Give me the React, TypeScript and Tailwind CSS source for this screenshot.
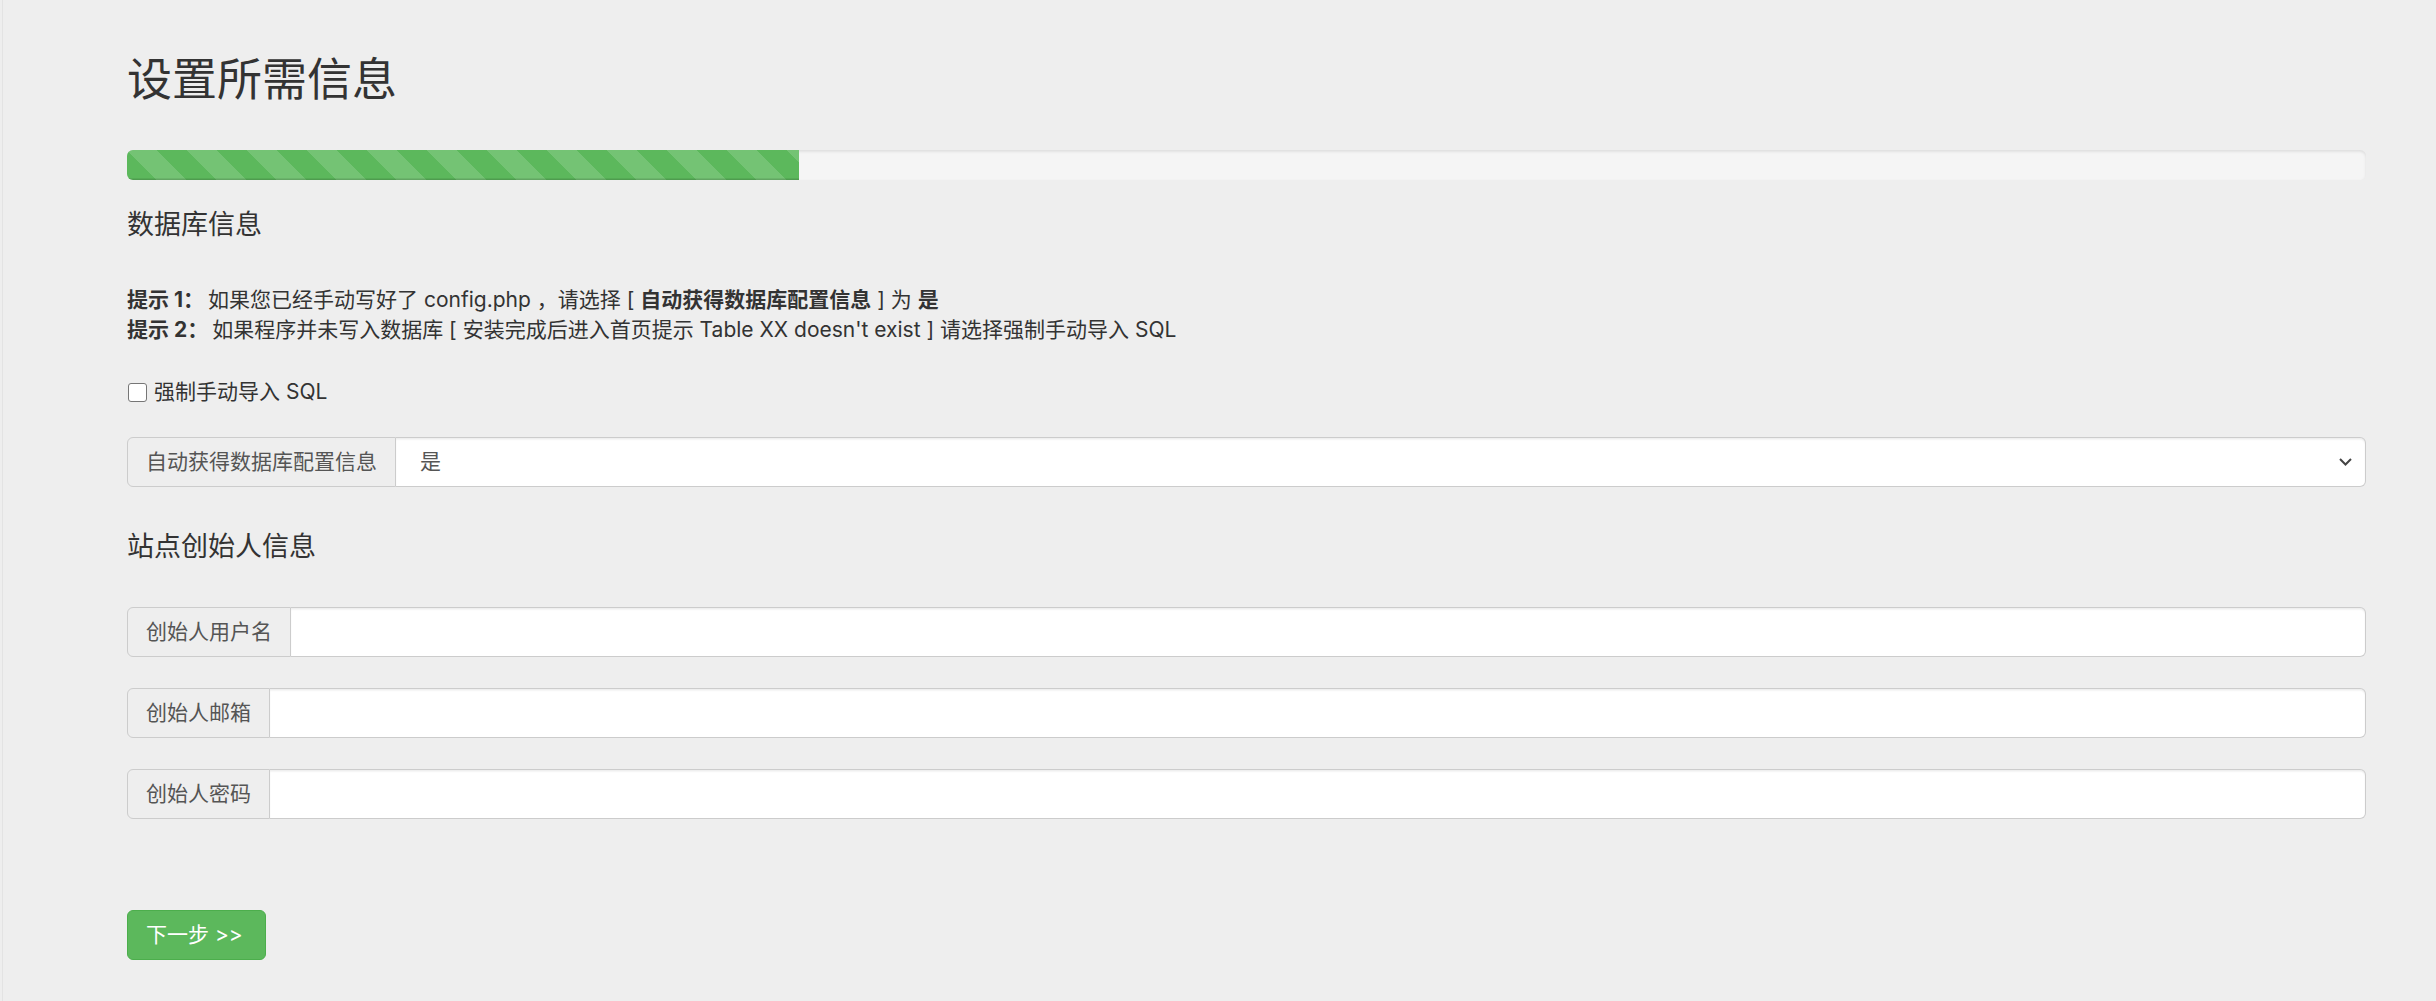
import { useState } from 'react';

/* ─── Input group (label addon + field) ─── */

function InputGroup({ label, type = 'text' }: { label: string; type?: string }) {
  return (
    <div className="flex h-[50px] w-full">
      <span className="flex items-center whitespace-nowrap rounded-l-[6px] border border-[#ccc] bg-[#eee] px-[18px] text-[21px] text-[#555]">
        {label}
      </span>
      <input
        type={type}
        className="min-w-0 flex-1 rounded-r-[6px] border border-l-0 border-[#ccc] bg-white px-[18px] text-[21px] text-[#555] shadow-[inset_0_1.5px_1.5px_rgba(0,0,0,0.075)] outline-none"
      />
    </div>
  );
}

export default function App() {
  const [forceSql, setForceSql] = useState(false);
  const [autoConfig, setAutoConfig] = useState('1');

  return (
    <div className="min-h-screen bg-[#eee] font-['Inter','Noto_Sans_CJK_SC',sans-serif] text-[#333]">
      <div className="ml-[2px] min-h-screen border-l border-[#e3e3e3] pb-[40px] pl-[124px] pr-[70px] pt-[55px]">
        <h1 className="text-[45px] font-normal leading-[50px]">设置所需信息</h1>

        {/* Progress */}
        <div className="mt-[45px] h-[30px] overflow-hidden rounded-[6px] bg-[#f5f5f5] shadow-[inset_0_1.5px_3px_rgba(0,0,0,0.1)]">
          <div className="h-full w-[30%] bg-[#5cb85c] bg-[linear-gradient(45deg,rgba(255,255,255,0.15)_25%,transparent_25%,transparent_50%,rgba(255,255,255,0.15)_50%,rgba(255,255,255,0.15)_75%,transparent_75%,transparent)] bg-size-[60px_60px] shadow-[inset_0_-1.5px_0_rgba(0,0,0,0.15)]" />
        </div>

        {/* Database */}
        <h4 className="mt-[30px] text-[27px] font-normal leading-[30px]">数据库信息</h4>

        <div className="mt-[45px] text-[21px] leading-[30px]">
          <p>
            <b className="mr-[4px]">提示 1：</b>如果您已经手动写好了 config.php ，请选择 [ <b>自动获得数据库配置信息</b> ] 为 <b>是</b>
          </p>
          <p>
            <b className="mr-[4px]">提示 2：</b>如果程序并未写入数据库 [ 安装完成后进入首页提示 Table XX doesn't exist ] 请选择强制手动导入 SQL
          </p>
        </div>

        <label className="mt-[32px] flex h-[30px] items-center gap-[7px] text-[21px]">
          <input
            type="checkbox"
            checked={forceSql}
            onChange={(e) => setForceSql(e.target.checked)}
            className="ml-[1px] h-[19px] w-[19px] appearance-none rounded-[3px] border border-[#767676] bg-white checked:border-[#0075ff] checked:bg-[#0075ff]"
          />
          强制手动导入 SQL
        </label>

        <div className="mt-[30px] flex h-[50px] w-full">
          <span className="flex items-center whitespace-nowrap rounded-l-[6px] border border-[#ccc] bg-[#eee] px-[18px] text-[21px] text-[#555]">
            自动获得数据库配置信息
          </span>
          <div className="relative flex-1">
            <select
              value={autoConfig}
              onChange={(e) => setAutoConfig(e.target.value)}
              className="h-full w-full appearance-none rounded-r-[6px] border border-l-0 border-[#ccc] bg-white pl-[24px] text-[21px] text-[#555] shadow-[inset_0_1.5px_1.5px_rgba(0,0,0,0.075)] outline-none"
            >
              <option value="1">是</option>
              <option value="0">否</option>
            </select>
            <svg
              className="pointer-events-none absolute right-[14px] top-1/2 -translate-y-1/2"
              width="13"
              height="9"
              viewBox="0 0 13 9"
              fill="none"
            >
              <path d="M1 1.5l5.5 5.5 5.5-5.5" stroke="#444" strokeWidth="2" />
            </svg>
          </div>
        </div>

        {/* Founder */}
        <h4 className="mt-[45px] text-[27px] font-normal leading-[30px]">站点创始人信息</h4>

        <div className="mt-[45px] flex flex-col gap-[31px]">
          <InputGroup label="创始人用户名" />
          <InputGroup label="创始人邮箱" />
          <InputGroup label="创始人密码" type="password" />
        </div>

        <button className="mt-[91px] flex h-[50px] items-center rounded-[6px] border border-[#4cae4c] bg-[#5cb85c] pl-[18px] pr-[22px] text-[21px] text-white">
          下一步 &gt;&gt;
        </button>
      </div>
    </div>
  );
}
